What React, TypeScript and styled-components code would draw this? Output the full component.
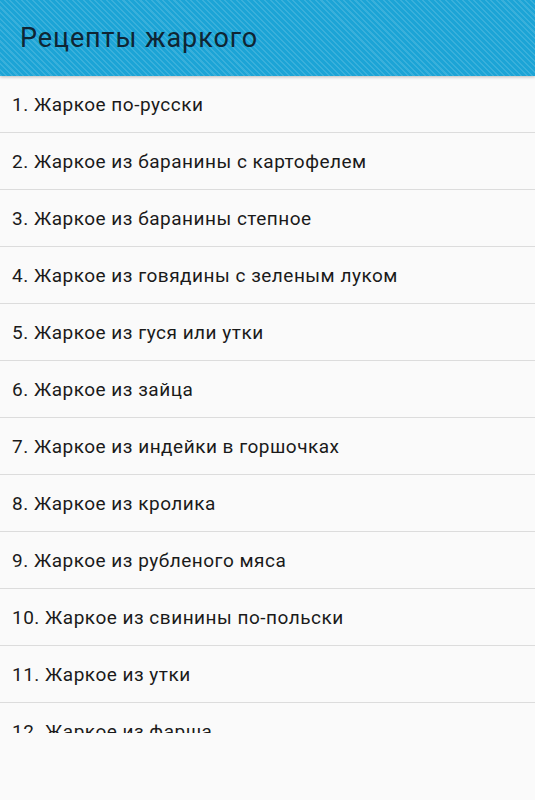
import styled, { createGlobalStyle } from 'styled-components';

const RECIPES = [
  'Жаркое по-русски',
  'Жаркое из баранины с картофелем',
  'Жаркое из баранины степное',
  'Жаркое из говядины с зеленым луком',
  'Жаркое из гуся или утки',
  'Жаркое из зайца',
  'Жаркое из индейки в горшочках',
  'Жаркое из кролика',
  'Жаркое из рубленого мяса',
  'Жаркое из свинины по-польски',
  'Жаркое из утки',
  'Жаркое из фарша',
];

const GlobalStyle = createGlobalStyle`
  html, body {
    margin: 0;
    padding: 0;
    background: #fafafa;
    font-family: Roboto, "Noto Sans", sans-serif;
  }
`;

function App() {
  return (
    <>
      <GlobalStyle />
      <StyledPage>
        <StyledHeader>
          <StyledTitle>Рецепты жаркого</StyledTitle>
        </StyledHeader>
        <StyledList>
          {RECIPES.map((name, i) => (
            <StyledItem key={name}>
              {i + 1}. {name}
            </StyledItem>
          ))}
        </StyledList>
      </StyledPage>
    </>
  );
}

const StyledPage = styled.div`
  width: 535px;
  height: 800px;
  background: #fafafa;
  overflow: hidden;
`;

const StyledHeader = styled.header`
  position: relative;
  z-index: 1;
  display: flex;
  align-items: center;

  height: 76px;
  padding-left: 20px;
  background-color: #1ca4d6;
  background-image: repeating-linear-gradient(
    45deg,
    rgba(255, 255, 255, 0.13) 0px,
    rgba(255, 255, 255, 0.13) 1.5px,
    rgba(0, 0, 0, 0) 1.5px,
    rgba(0, 0, 0, 0) 4px
  );
  box-shadow: 0 1px 3px rgba(0, 0, 0, 0.25);
`;

const StyledTitle = styled.h1`
  margin: 0;
  font-size: 27px;
  font-weight: 400;
  letter-spacing: 0.9px;
  color: #0f2533;
`;

const StyledList = styled.ul`
  height: 657px;
  margin: 0;
  padding: 0;
  list-style: none;
  overflow: hidden;
`;

const StyledItem = styled.li`
  display: flex;
  align-items: center;

  height: 56px;
  padding-left: 12px;
  border-bottom: 1px solid #dcdcdc;
  font-size: 19px;
  letter-spacing: 0.5px;
  color: #1a1a1a;
`;

export default App;
